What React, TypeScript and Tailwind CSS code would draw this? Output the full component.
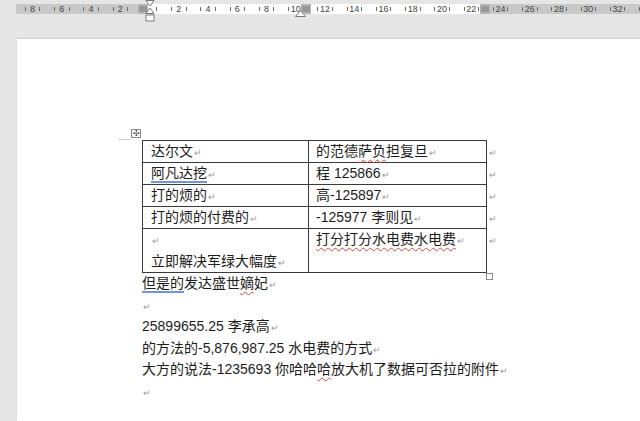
import React from 'react';

const font = { fontFamily: '"Liberation Sans", "Noto Sans CJK SC", sans-serif' };

const rulerNums = [-8, -6, -4, -2, 0, 2, 4, 6, 8, 10, 12, 14, 16, 18, 20, 22, 24, 26, 28, 30, 32, 34];

function Mark() {
  return <span className="ml-[1px] text-[9px] leading-none text-[#9a9a9a] align-baseline">↵</span>;
}

function Wavy({ children }: { children: React.ReactNode }) {
  return (
    <span className="underline decoration-wavy decoration-[#e0473f] decoration-[1px] underline-offset-[3px]">
      {children}
    </span>
  );
}

function Blue({ children }: { children: React.ReactNode }) {
  return (
    <span className="underline decoration-[#6f97d2] decoration-[1.5px] underline-offset-[3px]">
      {children}
    </span>
  );
}

function ColMarker() {
  return (
    <svg width="10" height="10" viewBox="0 0 10 10">
      <rect x="0" y="0" width="10" height="10" fill="#b4b4b4" />
      <path d="M2 2v6M4 2v6M6 2v6M8 2v6" stroke="#7d7d7d" strokeWidth="1" />
    </svg>
  );
}

function Ruler() {
  return (
    <div className="relative ml-[16px] h-[10px] pl-[2px] flex overflow-hidden bg-[linear-gradient(to_right,#c8c8c8_132px,#fff_132px,#fff_464px,#c8c8c8_464px)]">
      {rulerNums.map((n) => (
        <div key={n} className="w-[29.25px] shrink-0 flex justify-center items-center">
          <div className="w-[15.6px] flex justify-between items-center">
            <span className="w-px h-[4px] bg-[#6a6a6a]" />
            <span className="text-[9px] leading-none text-[#444]">{n === 0 || n === 34 ? '' : Math.abs(n)}</span>
            <span className="w-px h-[4px] bg-[#6a6a6a]" />
          </div>
        </div>
      ))}
      <div className="absolute left-[122px] top-0">
        <ColMarker />
      </div>
      <div className="absolute left-[285px] top-0">
        <ColMarker />
      </div>
      <div className="absolute left-[464px] top-0">
        <ColMarker />
      </div>
    </div>
  );
}

export default function App() {
  const rows: [React.ReactNode, React.ReactNode][] = [
    [<>达尔文<Mark /></>, <>的范德<Wavy>萨负</Wavy>担复旦<Mark /></>],
    [<><Blue>阿凡达挖</Blue><Mark /></>, <>程 125866<Mark /></>],
    [<>打的烦的<Mark /></>, <>高-125897<Mark /></>],
    [<>打的烦的付费的<Mark /></>, <>-125977 李则见<Mark /></>],
  ];

  return (
    <div className="relative w-[640px] h-[421px] overflow-hidden bg-[#e6e6e6] text-[#1c1c1c]" style={font}>
      <div className="pt-[4px]">
        <Ruler />
      </div>
      {/* indent markers over the ruler */}
      <svg className="absolute left-[145px] top-0" width="10" height="22" viewBox="0 0 10 22">
        <path d="M1 0.5h8L5 6z" fill="#fff" stroke="#7a7a7a" />
        <path d="M5 8l4 5.5H1z" fill="#fff" stroke="#7a7a7a" />
        <rect x="1" y="15" width="8" height="6" fill="#fff" stroke="#7a7a7a" />
      </svg>
      <svg className="absolute left-[295px] top-[10px]" width="11" height="7" viewBox="0 0 11 7">
        <path d="M5.5 0.5l5 6h-10z" fill="#fff" stroke="#7a7a7a" />
      </svg>

      <div className="absolute left-[17px] right-0 top-[38px] bottom-0 bg-white border-t border-[#d2d2d2] shadow-[0_0_2px_rgba(0,0,0,0.08)]">
        <div className="pl-[125px] pt-[101px] text-[14px]">
          <div className="relative flex items-start">
            <div className="absolute left-[-11px] top-[-11px] w-[10px] h-[9px] border border-[#8a8a8a] bg-white flex items-center justify-center text-[8px] leading-none text-[#444]">
              ✣
            </div>
            <div className="absolute left-[-24px] top-[-1px] w-[13px] h-px bg-[#cfcfcf]" />
            <table className="border-collapse">
              <tbody>
                {rows.map((r, i) => (
                  <tr key={i} className="h-[22px]">
                    <td className="w-[166px] h-[22px] border border-[#3a3a3a] px-[8px] py-0 leading-[21px] whitespace-nowrap">{r[0]}</td>
                    <td className="w-[178px] h-[22px] border border-[#3a3a3a] px-[7px] py-0 leading-[21px] whitespace-nowrap">{r[1]}</td>
                  </tr>
                ))}
                <tr className="h-[44px]">
                  <td className="h-[44px] border border-[#3a3a3a] px-[8px] py-0 leading-[21.5px] align-top whitespace-nowrap">
                    <div className="h-[21.5px]"><Mark /></div>
                    <div className="h-[21.5px]">立即解决军绿大幅度<Mark /></div>
                  </td>
                  <td className="h-[44px] border border-[#3a3a3a] px-[7px] py-0 leading-[21.5px] align-top whitespace-nowrap">
                    <div className="h-[21.5px]"><Wavy>打分打分水电费水电费</Wavy><Mark /></div>
                  </td>
                </tr>
              </tbody>
            </table>
            <div className="ml-[1px] flex flex-col">
              {[0, 1, 2, 3].map((i) => (
                <div key={i} className="h-[22px] leading-[22px]"><Mark /></div>
              ))}
              <div className="h-[44px] leading-[22px]"><Mark /></div>
            </div>
            <div className="absolute left-[344px] bottom-[-7px] w-[7px] h-[7px] border border-[#8a8a8a]" />
          </div>
          <div className="leading-[21.5px] whitespace-nowrap">
            <div className="h-[21.5px]"><Blue>但是的</Blue>发达盛世<Wavy>嫡</Wavy>妃<Mark /></div>
            <div className="h-[21.5px]"><Mark /></div>
            <div className="h-[21.5px]">25899655.25 李承高<Mark /></div>
            <div className="h-[21.5px]">的方法的-5,876,987.25 水电费的方式<Mark /></div>
            <div className="h-[21.5px]">大方的说法-1235693 你哈哈<Wavy>哈</Wavy>放大机了数据可否拉的附件<Mark /></div>
            <div className="h-[21.5px]"><Mark /></div>
          </div>
        </div>
      </div>
    </div>
  );
}
